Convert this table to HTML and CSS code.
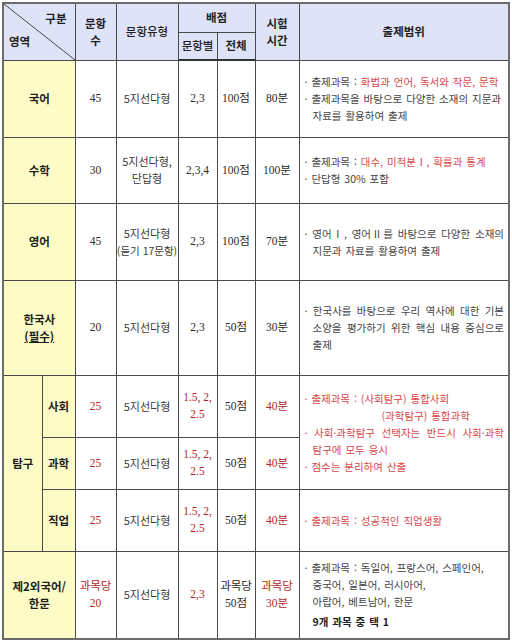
FILE: index.html
```html
<!DOCTYPE html>
<html lang="ko">
<head>
<meta charset="utf-8">
<link rel="stylesheet" href="styles.css">
</head>
<body>
<table class="exam">
  <colgroup>
    <col class="w1"><col class="w2"><col class="w3"><col class="w4"><col class="w5"><col class="w6"><col class="w7"><col class="w8">
  </colgroup>
  <tr class="h1">
    <th rowspan="2" colspan="2" class="diag"><span class="gubun">구분</span><span class="youngyeok">영역</span></th>
    <th rowspan="2">문항<br>수</th>
    <th rowspan="2" class="normal">문항유형</th>
    <th colspan="2">배점</th>
    <th rowspan="2">시험<br>시간</th>
    <th rowspan="2">출제범위</th>
  </tr>
  <tr class="h2">
    <th class="normal">문항별</th>
    <th>전체</th>
  </tr>
  <tr class="r-kor">
    <td colspan="2" class="area">국어</td>
    <td>45</td>
    <td class="type">5지선다형</td>
    <td>2,3</td>
    <td>100점</td>
    <td>80분</td>
    <td class="desc">
      <p>· 출제과목 : <span class="red">화법과 언어, 독서와 작문, 문학</span></p>
      <p>· 출제과목을 바탕으로 다양한 소재의 지문과 자료를 활용하여 출제</p>
    </td>
  </tr>
  <tr class="r-math">
    <td colspan="2" class="area">수학</td>
    <td>30</td>
    <td class="type">5지선다형,<br>단답형</td>
    <td>2,3,4</td>
    <td>100점</td>
    <td>100분</td>
    <td class="desc">
      <p>· 출제과목 : <span class="red">대수, 미적분Ⅰ, 확률과 통계</span></p>
      <p>· 단답형 30% 포함</p>
    </td>
  </tr>
  <tr class="r-eng">
    <td colspan="2" class="area">영어</td>
    <td>45</td>
    <td class="type">5지선다형<br><span class="small">(듣기 17문항)</span></td>
    <td>2,3</td>
    <td>100점</td>
    <td>70분</td>
    <td class="desc">
      <p class="just">· 영어Ⅰ, 영어Ⅱ를 바탕으로 다양한 소재의 지문과 자료를 활용하여 출제</p>
    </td>
  </tr>
  <tr class="r-hist">
    <td colspan="2" class="area">한국사<br><u>(필수)</u></td>
    <td>20</td>
    <td class="type">5지선다형</td>
    <td>2,3</td>
    <td>50점</td>
    <td>30분</td>
    <td class="desc">
      <p class="just">· 한국사를 바탕으로 우리 역사에 대한 기본 소양을 평가하기 위한 핵심 내용 중심으로 출제</p>
    </td>
  </tr>
  <tr class="r-soc">
    <td rowspan="3" class="area">탐구</td>
    <td class="area">사회</td>
    <td class="red">25</td>
    <td class="type">5지선다형</td>
    <td class="red">1.5, 2,<br>2.5</td>
    <td>50점</td>
    <td class="red">40분</td>
    <td rowspan="2" class="desc redtext">
      <p>· 출제과목 : (사회탐구) 통합사회</p>
      <p class="indent">(과학탐구) 통합과학</p>
      <p class="just">· 사회·과학탐구 선택자는 반드시 사회·과학 탐구에 모두 응시</p>
      <p>· 점수는 분리하여 산출</p>
    </td>
  </tr>
  <tr class="r-sci">
    <td class="area">과학</td>
    <td class="red">25</td>
    <td class="type">5지선다형</td>
    <td class="red">1.5, 2,<br>2.5</td>
    <td>50점</td>
    <td class="red">40분</td>
  </tr>
  <tr class="r-job">
    <td class="area">직업</td>
    <td class="red">25</td>
    <td class="type">5지선다형</td>
    <td class="red">1.5, 2,<br>2.5</td>
    <td>50점</td>
    <td class="red">40분</td>
    <td class="desc redtext">
      <p>· 출제과목 : 성공적인 직업생활</p>
    </td>
  </tr>
  <tr class="r-lang">
    <td colspan="2" class="area">제2외국어/<br>한문</td>
    <td class="red">과목당<br>20</td>
    <td class="type">5지선다형</td>
    <td class="red">2,3</td>
    <td>과목당<br>50점</td>
    <td class="red">과목당<br>30분</td>
    <td class="desc">
      <p>· 출제과목 : 독일어, 프랑스어, 스페인어,</p>
      <p class="cont">중국어, 일본어, 러시아어,</p>
      <p class="cont">아랍어, 베트남어, 한문</p>
      <p class="cont bold">9개 과목 중 택 1</p>
    </td>
  </tr>
</table>
</body>
</html>
```

FILE: styles.css
```css
html, body {
  margin: 0;
  padding: 0;
  background: #ffffff;
}

body {
  padding: 2px 0 0 2px;
  font-family: "Liberation Serif", "Noto Sans CJK KR", serif;
  color: #2b2b2b;
}

.exam {
  border-collapse: collapse;
  table-layout: fixed;
  width: 506px;
  border: 2px solid #6b6b6b;
}

.w1 { width: 39px; }
.w2 { width: 33px; }
.w3 { width: 41px; }
.w4 { width: 62px; }
.w5 { width: 39px; }
.w6 { width: 38px; }
.w7 { width: 44px; }
.w8 { width: 210px; }

.exam th,
.exam td {
  border: 1px solid #4a4a4a;
  padding: 0;
  text-align: center;
  vertical-align: middle;
  font-size: 11.5px;
  line-height: 17px;
  font-weight: normal;
  overflow: hidden;
}

.exam th {
  background: #dfe3f7;
  font-family: "Noto Sans CJK KR", sans-serif;
  font-weight: 700;
  font-size: 11.5px;
  color: #1e1e1e;
}

.exam th.normal {
  font-weight: 500;
}

.h1 { height: 29px; }
.h2 { height: 28px; }
.h2 th { border-bottom: 2px solid #333; }

.exam th.diag {
  position: relative;
  background-color: #dfe3f7;
  background-image: linear-gradient(to top right, transparent calc(50% - 0.7px), #333 50%, transparent calc(50% + 0.7px));
}

.gubun {
  position: absolute;
  top: 6px;
  right: 8px;
}

.youngyeok {
  position: absolute;
  bottom: 10px;
  left: 5px;
}

.r-kor { height: 77px; }
.r-math { height: 66px; }
.r-eng { height: 77px; }
.r-hist { height: 95px; }
.r-soc { height: 62px; }
.r-sci { height: 52px; }
.r-job { height: 62px; }
.r-lang { height: 88px; }

.exam td.area {
  background: #fdfcc6;
  font-family: "Noto Sans CJK KR", sans-serif;
  font-weight: 700;
  color: #1e1e1e;
}

.exam td.type {
  font-family: "Noto Sans CJK KR", sans-serif;
  font-size: 11px;
  color: #3a3a3a;
}

.small {
  font-size: 10.5px;
}

.exam td.red {
  color: #b3262a;
}

.exam td.desc {
  text-align: left;
  padding: 0 4px 0 5px;
  font-family: "Noto Sans CJK KR", sans-serif;
  font-size: 10.5px;
  line-height: 17px;
  color: #444;
  word-break: keep-all;
  word-spacing: 1px;
}

.desc p {
  margin: 0;
  padding-left: 8px;
  text-indent: -8px;
}

.desc p.just {
  text-align: justify;
}

.desc p.indent {
  padding-left: 77px;
  text-indent: 0;
}

.desc p.cont {
  text-indent: 0;
}

.desc p.bold {
  font-weight: 700;
  color: #1e1e1e;
  margin-top: 3px;
}

.red {
  color: #d9474a;
}

.exam td.redtext {
  color: #d9474a;
}
```
